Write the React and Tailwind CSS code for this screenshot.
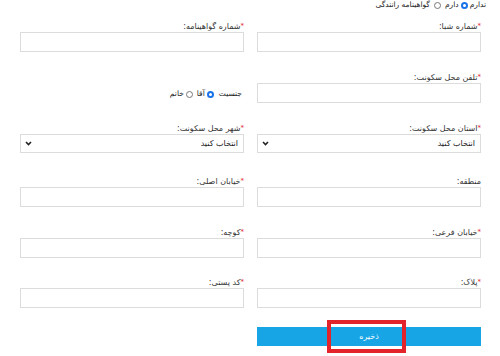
import React from 'react';

function Label({ text, required = true }) {
    return (
        <div className="h-[11px] text-[8px] leading-[11px] text-[#333] whitespace-nowrap">
            {required && <span className="text-[#e3242b] text-[7px] align-top">*</span>}
            {text}
        </div>
    );
}

function Field({ label, required }) {
    return (
        <div className="flex flex-col">
            <Label text={label} required={required} />
            <div className="h-[20px] border border-[#dcdcdc] bg-white"></div>
        </div>
    );
}

function SelectField({ label }) {
    return (
        <div className="flex flex-col">
            <Label text={label} />
            <div className="h-[19px] border border-[#dcdcdc] bg-white flex items-center justify-between pr-[5px] pl-[4px]">
                <span className="text-[8px] text-[#222]">انتخاب کنید</span>
                <svg width="7" height="5" viewBox="0 0 7 5">
                    <path d="M1 1 L3.5 3.5 L6 1" stroke="#222" strokeWidth="1.6" fill="none" />
                </svg>
            </div>
        </div>
    );
}

function Radio({ checked }) {
    return checked ? (
        <span className="inline-block w-[7px] h-[7px] rounded-full border-[2px] border-[#1a73e8] bg-white"></span>
    ) : (
        <span className="inline-block w-[7px] h-[7px] rounded-full border border-[#777] bg-white"></span>
    );
}

export default function App() {
    return (
        <div
            dir="rtl"
            className="w-[500px] h-[356px] bg-white overflow-hidden relative"
            style={{ fontFamily: '"DejaVu Sans", "Noto Sans", sans-serif' }}
        >
            {/* گواهینامه رانندگی */}
            <div className="h-[10px] flex items-center justify-start pr-[14px] text-[7.5px] text-[#222] gap-[2px]">
                <span>ندارم</span>
                <Radio checked />
                <span className="ml-[2px]">دارم</span>
                <Radio />
                <span className="mr-[2px]">گواهینامه رانندگی</span>
            </div>

            <div className="grid grid-cols-2 gap-x-[13px] pr-[19px] pl-[20px] mt-[11px]">
                <Field label="شماره شبا:" />
                <Field label="شماره گواهینامه:" />

                <div className="mt-[20px]">
                    <Field label="تلفن محل سکونت:" />
                </div>
                <div className="mt-[33px] flex items-center text-[7.5px] text-[#222] gap-[2px] pr-[2px]">
                    <span className="ml-[3px]">جنسیت</span>
                    <Radio checked />
                    <span className="ml-[2px]">آقا</span>
                    <Radio />
                    <span>خانم</span>
                </div>

                <div className="mt-[20px]">
                    <SelectField label="استان محل سکونت:" />
                </div>
                <div className="mt-[20px]">
                    <SelectField label="شهر محل سکونت:" />
                </div>

                <div className="mt-[23px]">
                    <Field label="منطقه:" required={false} />
                </div>
                <div className="mt-[23px]">
                    <Field label="خیابان اصلی:" />
                </div>

                <div className="mt-[20px]">
                    <Field label="خیابان فرعی:" />
                </div>
                <div className="mt-[20px]">
                    <Field label="کوچه:" />
                </div>

                <div className="mt-[19px]">
                    <Field label="پلاک:" />
                </div>
                <div className="mt-[19px]">
                    <Field label="کد پستی:" />
                </div>

                <div className="mt-[19px] h-[19px] bg-[#17a5e6] flex items-center justify-center">
                    <span className="text-[8px] text-white">ذخیره</span>
                </div>
            </div>

            <div className="absolute left-[327px] top-[320px] w-[79px] h-[33px] border-[4px] border-[#e3242b]"></div>
        </div>
    );
}
